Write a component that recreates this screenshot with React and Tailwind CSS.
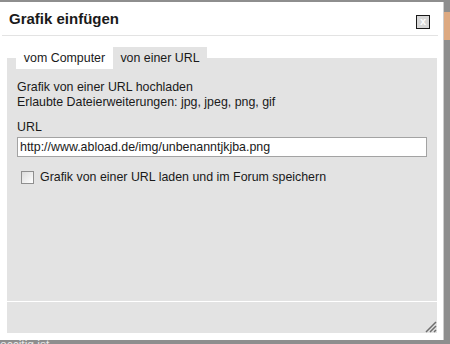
import React from "react";

export default function App() {
  const font = { fontFamily: '"Liberation Sans", Arial, sans-serif' };
  return (
    <div
      className="w-[450px] h-[344px] overflow-hidden bg-[#8e8e8e] flex flex-col text-[#1a1a1a]"
      style={font}
    >
      <div className="h-[2px] shrink-0" />
      <div className="flex h-[338px] shrink-0">
        <div className="w-[444px] bg-white border-r border-[#cdcdcd] flex flex-col">
          {/* header */}
          <div className="h-[33px] flex items-center justify-between pl-[9px] pr-[13px]">
            <span className="text-[15px] font-bold leading-none">Grafik einfügen</span>
            <span className="mt-[6px] w-[14px] h-[14px] border border-[#1a1a1a] bg-[#d8d8d8] flex items-center justify-center text-white text-[11px] font-bold leading-none">
              x
            </span>
          </div>
          <div className="h-px bg-[#e3e3e3] ml-[2px] mr-[5px]" />
          <div className="h-[11px]" />
          {/* tabs */}
          <div className="relative z-10 -mb-[11px] ml-[16px] flex h-[22px] text-[12.4px]">
            <div className="w-[97px] bg-white flex items-center justify-center pt-[1px]">vom Computer</div>
            <div className="w-[94px] bg-[#e3e3e3] flex items-center justify-center pt-[1px]">von einer URL</div>
          </div>
          {/* panel */}
          <div className="ml-[7px] w-[430px] flex-1 bg-[#e3e3e3] pl-[10px] pt-[22px] text-[12.4px] leading-[15px]">
            <div>Grafik von einer URL hochladen</div>
            <div>Erlaubte Dateierweiterungen: jpg, jpeg, png, gif</div>
            <div className="mt-[10px]">URL</div>
            <div className="mt-[2px] w-[410px] h-[20px] bg-white border border-[#a3a3a3] flex items-center pl-[2px]">
              http://www.abload.de/img/unbenanntjkjba.png
            </div>
            <div className="mt-[13px] flex items-center pl-[4px]">
              <span className="w-[13px] h-[13px] border border-[#8f8f8f] bg-gradient-to-br from-[#dcdcdc] to-white" />
              <span className="ml-[6px]">Grafik von einer URL laden und im Forum speichern</span>
            </div>
          </div>
          <div className="h-px bg-white" />
          <div className="ml-[7px] w-[430px] h-[31px] bg-[#e3e3e3] flex items-end justify-end">
            <svg width="12" height="12" viewBox="0 0 12 12" className="block">
              <path d="M11 1 L1 11 M11 5 L5 11 M11 9 L9 11" stroke="#6e6e6e" strokeWidth="1.5" />
            </svg>
          </div>
          <div className="h-[7px]" />
        </div>
        <div className="flex-1">
          <div className="mt-[10px] h-[28px] bg-[#dda981]" />
        </div>
      </div>
      <div className="h-[4px] overflow-hidden">
        <div className="text-[12px] leading-[12px] text-[#e8e8e8] -mt-[1px]">occitig ist</div>
      </div>
    </div>
  );
}
